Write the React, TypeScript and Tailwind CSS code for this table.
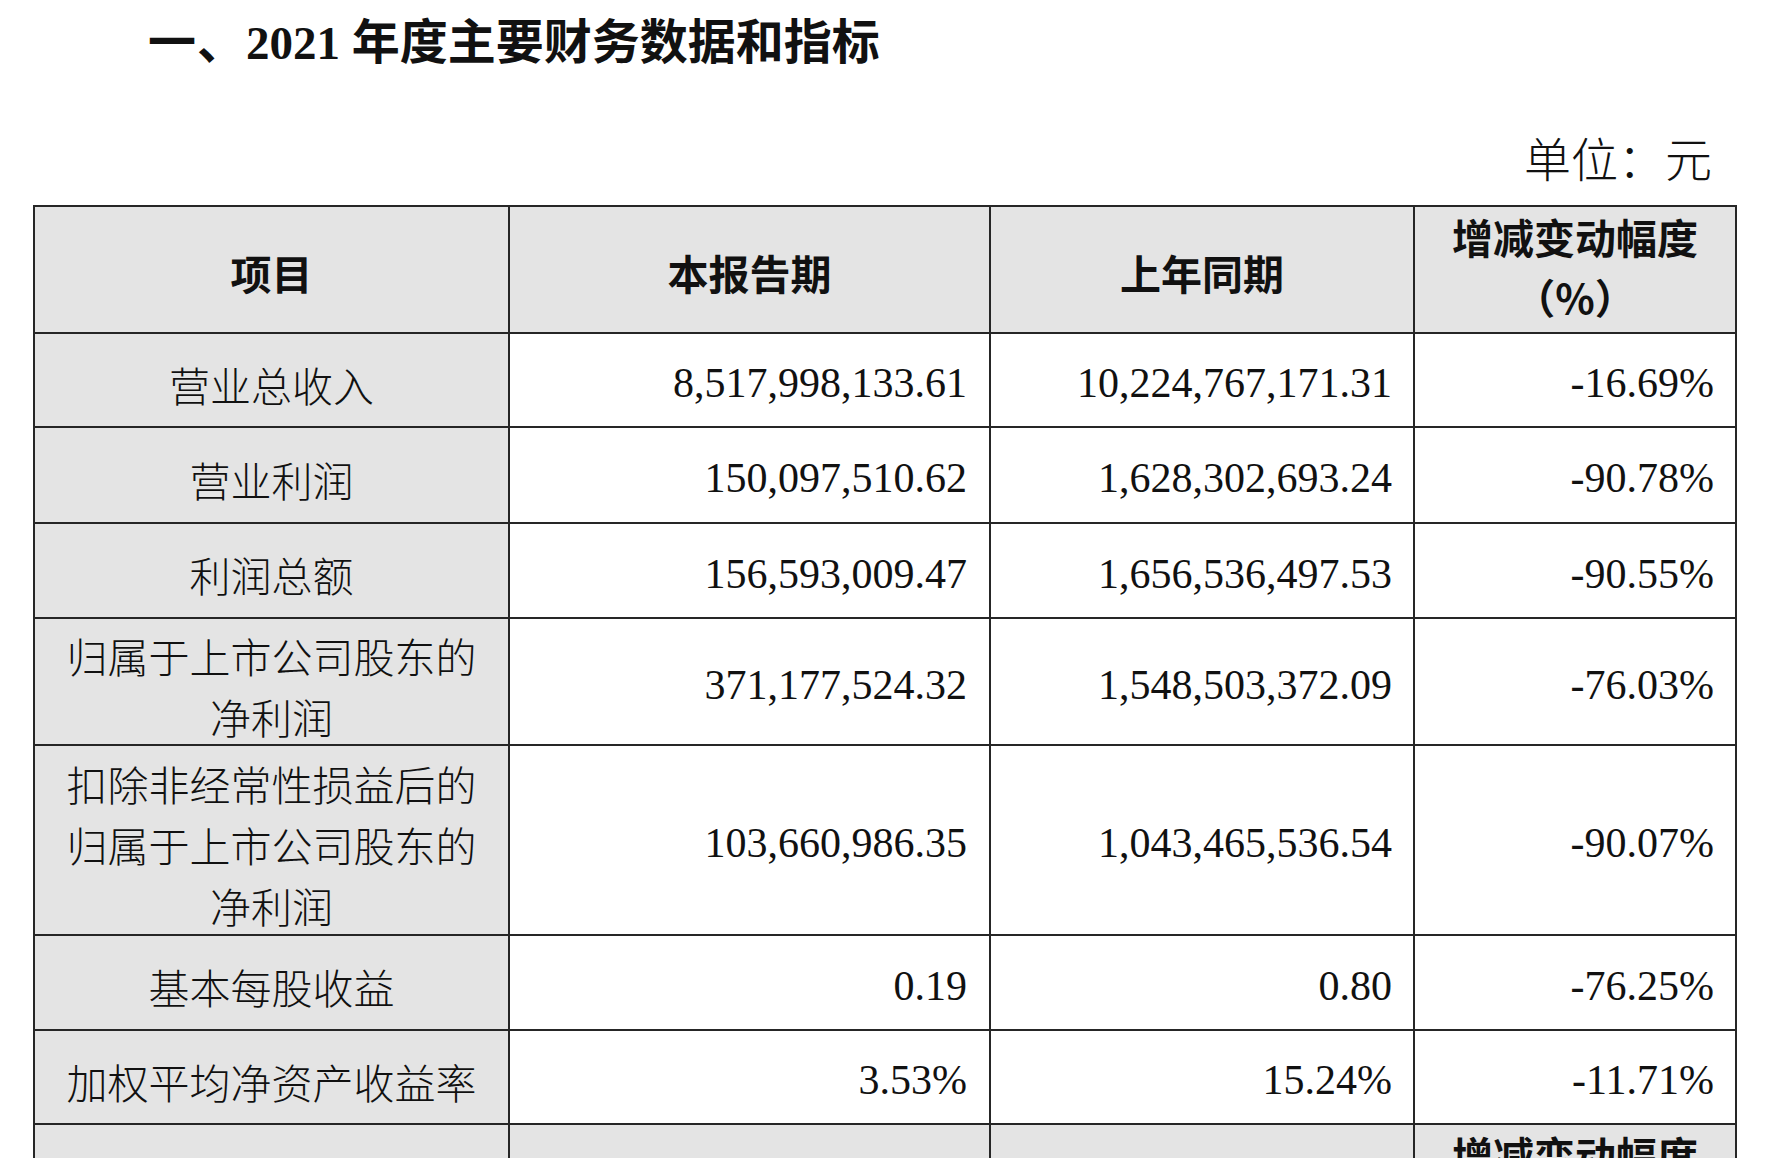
import React from "react";

type Row = { label: string; a: string; b: string; c: string; h: string };

const rows: Row[] = [
  { label: "营业总收入", a: "8,517,998,133.61", b: "10,224,767,171.31", c: "-16.69%", h: "h-[94px]" },
  { label: "营业利润", a: "150,097,510.62", b: "1,628,302,693.24", c: "-90.78%", h: "h-[96px]" },
  { label: "利润总额", a: "156,593,009.47", b: "1,656,536,497.53", c: "-90.55%", h: "h-[95px]" },
  { label: "归属于上市公司股东的净利润", a: "371,177,524.32", b: "1,548,503,372.09", c: "-76.03%", h: "h-[127px]" },
  { label: "扣除非经常性损益后的归属于上市公司股东的净利润", a: "103,660,986.35", b: "1,043,465,536.54", c: "-90.07%", h: "h-[190px]" },
  { label: "基本每股收益", a: "0.19", b: "0.80", c: "-76.25%", h: "h-[95px]" },
  { label: "加权平均净资产收益率", a: "3.53%", b: "15.24%", c: "-11.71%", h: "h-[94px]" },
];

const headCell =
  "h-[127px] bg-[#e4e4e4] border-r-2 border-b-2 border-[#262626] flex items-center justify-center text-center text-[41px] leading-[60px] font-bold text-[#111] font-['Noto_Sans_CJK_SC','Liberation_Serif',sans-serif]";

function HeaderRow({ full }: { full: boolean }) {
  return (
    <>
      <div className={`${headCell} pt-[5px]`}>{full ? "项目" : ""}</div>
      <div className={`${headCell} pt-[5px]`}>{full ? "本报告期" : ""}</div>
      <div className={`${headCell} pt-[5px]`}>{full ? "上年同期" : ""}</div>
      <div className={`${headCell} pb-[7px]`}>
        <span>
          增减变动幅度
          <br />
          （%）
        </span>
      </div>
    </>
  );
}

const numCell =
  "border-r-2 border-b-2 border-[#262626] flex items-center justify-end pt-[6px] text-[42px] leading-[50px]";

export default function App() {
  return (
    <div className="w-[1768px] h-[1158px] overflow-hidden bg-white text-[#111] font-['Liberation_Serif','Noto_Sans_CJK_SC',serif]">
      <div className="pl-[148px] pt-[8px] h-[74px] leading-[60px] font-bold whitespace-nowrap">
        <span className="text-[48px] tracking-[1px] font-['Noto_Sans_CJK_SC',sans-serif]">一、</span>
        <span className="text-[47px] font-['Liberation_Serif',serif]">2021 </span>
        <span className="text-[48px] tracking-normal font-['Noto_Sans_CJK_SC',sans-serif]">年度主要财务数据和指标</span>
      </div>
      <div className="mt-[58px] h-[50px] leading-[50px] text-[47px] font-light text-right pr-[56px] font-['Noto_Sans_CJK_SC',sans-serif]">
        单位：元
      </div>
      <div className="mt-[23px] ml-[33px] w-[1704px] border-l-2 border-t-2 border-[#262626] grid grid-cols-[475px_481px_424px_322px]">
        <HeaderRow full={true} />
        {rows.map((r, i) => (
          <React.Fragment key={i}>
            <div
              className={`${r.h} bg-[#e4e4e4] border-r-2 border-b-2 border-[#262626] flex items-center justify-center px-[28px] pt-[8px] text-center text-[41px] leading-[61px] font-light font-['Noto_Sans_CJK_SC',sans-serif]`}
            >
              <span>{r.label}</span>
            </div>
            <div className={`${r.h} ${numCell} pr-[22px]`}>{r.a}</div>
            <div className={`${r.h} ${numCell} pr-[21px]`}>{r.b}</div>
            <div className={`${r.h} ${numCell} pr-[21px]`}>{r.c}</div>
          </React.Fragment>
        ))}
        <HeaderRow full={false} />
      </div>
    </div>
  );
}
